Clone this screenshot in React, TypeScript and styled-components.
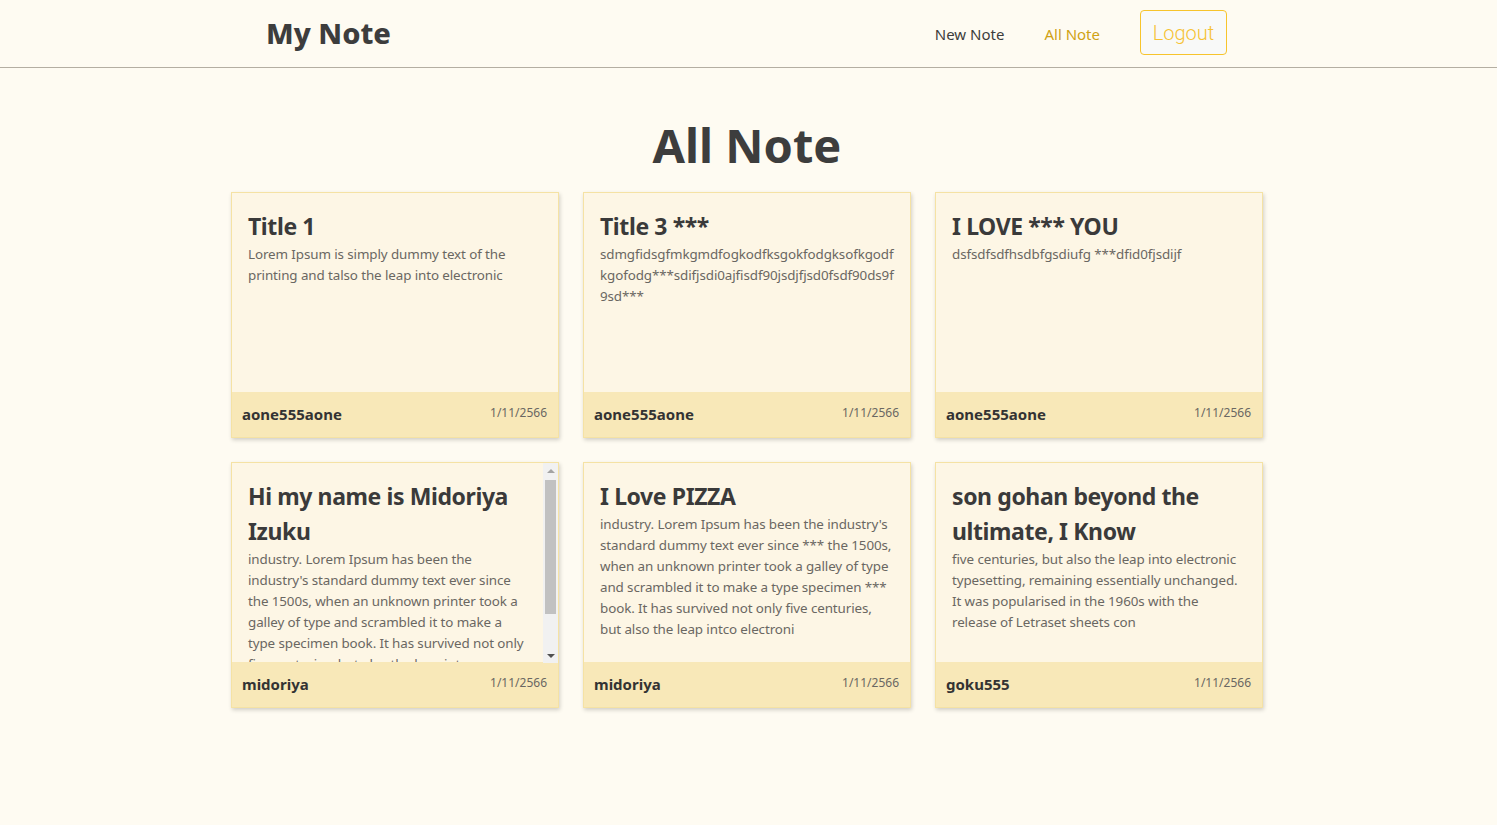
import React from "react";
import styled, { createGlobalStyle } from "styled-components";

const GlobalStyle = createGlobalStyle`
  html, body { margin: 0; padding: 0; background: #fefbf2; }
  body { font-family: "Noto Sans", "Open Sans", sans-serif; color: #3d3d3d; }
  * { box-sizing: border-box; }
`;

const Header = styled.header`
  height: 68px;
  border-bottom: 1px solid #b4aea2;
`;

const HeaderInner = styled.div`
  width: 965px;
  padding-right: 4px;
  margin: 0 auto;
  height: 100%;
  display: flex;
  align-items: center;
`;

const Logo = styled.div`
  font-size: 29px;
  font-weight: 800;
  color: #3d3d3d;
  margin-top: -2px;
`;

const Nav = styled.nav`
  margin-left: auto;
  display: flex;
  align-items: center;
`;

const NavLink = styled.a<{ $active?: boolean }>`
  font-size: 15px;
  color: ${(p) => (p.$active ? "#d0a214" : "#3d3d3d")};
  text-decoration: none;
  margin-right: 40px;
  cursor: pointer;
`;

const LogoutButton = styled.button`
  width: 87px;
  height: 45px;
  border: 1px solid #f7c42c;
  border-radius: 4px;
  background: #f8f9f8;
  color: #f6c234;
  font-family: "Roboto", "Liberation Sans", sans-serif;
  font-weight: 300;
  font-size: 20px;
  padding: 0;
  margin-top: -2px;
`;

const Main = styled.main`
  width: 1035px;
  padding-right: 3px;
  margin: 0 auto;
  padding-bottom: 40px;
`;

const PageTitle = styled.h1`
  margin: 48px 0 18px;
  text-align: center;
  font-size: 47px;
  font-weight: 700;
  line-height: 58px;
  color: #3d3d3d;
`;

const Grid = styled.div`
  display: grid;
  grid-template-columns: repeat(3, 328px);
  column-gap: 24px;
  row-gap: 24px;
`;

const Card = styled.article`
  position: relative;
  height: 246px;
  background: #fdf6e5;
  border: 1px solid #f5e2a4;
  box-shadow: 1px 2px 4px rgba(0, 0, 0, 0.18);
  display: flex;
  flex-direction: column;
`;

const CardBody = styled.div<{ $scroll?: boolean }>`
  flex: 1;
  overflow: hidden;
  padding: 16px ${(p) => (p.$scroll ? "31px" : "16px")} 0 16px;
  min-height: 0;
`;

const ScrollTrack = styled.div`
  position: absolute;
  top: 0;
  right: 0;
  width: 15px;
  height: 200px;
  background: #f1f1f1;
  display: flex;
  flex-direction: column;
  align-items: center;
`;

const ScrollArrow = styled.div<{ $down?: boolean }>`
  width: 15px;
  height: 15px;
  flex-shrink: 0;
  display: flex;
  align-items: center;
  justify-content: center;
  &::before {
    content: "";
    border-left: 4px solid transparent;
    border-right: 4px solid transparent;
    ${(p) =>
      p.$down
        ? "border-top: 4px solid #505050;"
        : "border-bottom: 4px solid #a3a3a3;"}
  }
`;

const ScrollThumb = styled.div`
  width: 11px;
  height: 134px;
  margin-top: 2px;
  background: #c1c1c1;
`;

const ScrollSpacer = styled.div`
  flex: 1;
`;

const CardTitle = styled.h2`
  margin: 0;
  font-size: 23px;
  font-weight: 700;
  line-height: 35px;
  letter-spacing: -0.4px;
  color: #3a3a3a;
  overflow-wrap: anywhere;
`;

const CardText = styled.p`
  margin: 0;
  font-size: 13.4px;
  line-height: 21px;
  letter-spacing: -0.1px;
  color: #6a6762;
  overflow-wrap: anywhere;
`;

const CardFooter = styled.div`
  height: 45px;
  flex-shrink: 0;
  background: #f8e8b8;
  display: flex;
  justify-content: space-between;
  align-items: flex-start;
  padding: 0 11px 0 10px;
`;

const Author = styled.span`
  font-size: 15px;
  font-weight: 700;
  color: #333;
  margin-top: 12px;
`;

const DateText = styled.span`
  font-size: 12px;
  color: #6a6762;
  margin-top: 12px;
`;

const notes = [
  {
    title: "Title 1",
    body: "Lorem Ipsum is simply dummy text of the printing and talso the leap into electronic",
    author: "aone555aone",
  },
  {
    title: "Title 3 ***",
    body: "sdmgfidsgfmkgmdfogkodfksgokfodgksofkgodfkgofodg***sdifjsdi0ajfisdf90jsdjfjsd0fsdf90ds9f9sd***",
    author: "aone555aone",
  },
  {
    title: "I LOVE *** YOU",
    body: "dsfsdfsdfhsdbfgsdiufg ***dfid0fjsdijf",
    author: "aone555aone",
  },
  {
    title: "Hi my name is Midoriya Izuku",
    body: "industry. Lorem Ipsum has been the industry's standard dummy text ever since the 1500s, when an unknown printer took a galley of type and scrambled it to make a type specimen book. It has survived not only five centuries, but also the leap into electronic typesetting, remaining essentially unchanged.",
    author: "midoriya",
    scroll: true,
  },
  {
    title: "I Love PIZZA",
    body: "industry. Lorem Ipsum has been the industry's standard dummy text ever since *** the 1500s, when an unknown printer took a galley of type and scrambled it to make a type specimen *** book. It has survived not only five centuries, but also the leap intco electroni",
    author: "midoriya",
  },
  {
    title: "son gohan beyond the ultimate, I Know",
    body: "five centuries, but also the leap into electronic typesetting, remaining essentially unchanged. It was popularised in the 1960s with the release of Letraset sheets con",
    author: "goku555",
  },
];

export default function App() {
  return (
    <>
      <GlobalStyle />
      <Header>
        <HeaderInner>
          <Logo>My Note</Logo>
          <Nav>
            <NavLink>New Note</NavLink>
            <NavLink $active>All Note</NavLink>
            <LogoutButton>Logout</LogoutButton>
          </Nav>
        </HeaderInner>
      </Header>
      <Main>
        <PageTitle>All Note</PageTitle>
        <Grid>
          {notes.map((n, i) => (
            <Card key={i}>
              <CardBody $scroll={n.scroll}>
                <CardTitle>{n.title}</CardTitle>
                <CardText>{n.body}</CardText>
              </CardBody>
              {n.scroll && (
                <ScrollTrack aria-hidden>
                  <ScrollArrow />
                  <ScrollThumb />
                  <ScrollSpacer />
                  <ScrollArrow $down />
                </ScrollTrack>
              )}
              <CardFooter>
                <Author>{n.author}</Author>
                <DateText>1/11/2566</DateText>
              </CardFooter>
            </Card>
          ))}
        </Grid>
      </Main>
    </>
  );
}
